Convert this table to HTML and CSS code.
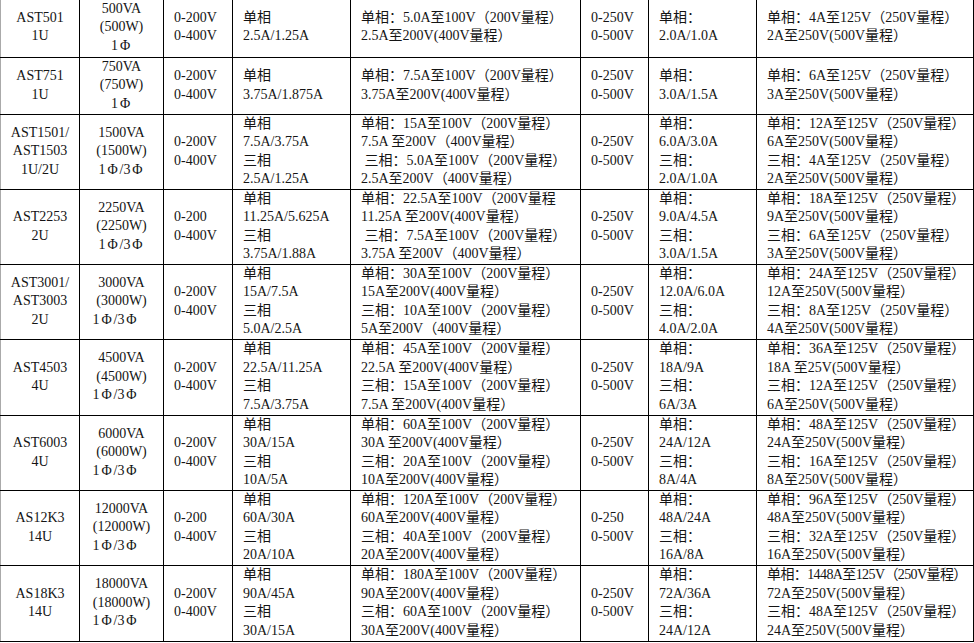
FILE: index.html
```html
<!DOCTYPE html>
<html lang="zh">
<head>
<meta charset="utf-8">
<title>AST 规格表</title>
<link rel="stylesheet" href="styles.css">
</head>
<body>
<table class="spec">
<colgroup>
<col class="c1"><col class="c2"><col class="c3"><col class="c4"><col class="c5"><col class="c6"><col class="c7"><col class="c8">
</colgroup>
<tbody>
<tr class="r1 first">
<td class="ctr">AST501<br>1U</td>
<td class="ctr">500VA<br>(500W)<br>1<span class="fw">Φ</span></td>
<td>0-200V<br>0-400V</td>
<td>单相<br>2.5A/1.25A</td>
<td>单相：5.0A至100V（200V量程）<br>2.5A至200V(400V量程）</td>
<td>0-250V<br>0-500V</td>
<td>单相：<br>2.0A/1.0A</td>
<td>单相：4A至125V（250V量程）<br>2A至250V(500V量程）</td>
</tr>
<tr class="r2">
<td class="ctr">AST751<br>1U</td>
<td class="ctr">750VA<br>(750W)<br>1<span class="fw">Φ</span></td>
<td>0-200V<br>0-400V</td>
<td>单相<br>3.75A/1.875A</td>
<td>单相：7.5A至100V（200V量程）<br>3.75A至200V(400V量程）</td>
<td>0-250V<br>0-500V</td>
<td>单相：<br>3.0A/1.5A</td>
<td>单相：6A至125V（250V量程）<br>3A至250V(500V量程）</td>
</tr>
<tr class="r4">
<td class="ctr">AST1501/<br>AST1503<br>1U/2U</td>
<td class="ctr">1500VA<br>(1500W)<br>1<span class="fw">Φ</span>/3<span class="fw">Φ</span></td>
<td>0-200V<br>0-400V</td>
<td>单相<br>7.5A/3.75A<br>三相<br>2.5A/1.25A</td>
<td>单相：15A至100V（200V量程）<br>7.5A 至200V（400V量程）<br> 三相：5.0A至100V（200V量程）<br>2.5A至200V（400V量程）</td>
<td>0-250V<br>0-500V</td>
<td>单相：<br>6.0A/3.0A<br>三相：<br>2.0A/1.0A</td>
<td>单相：12A至125V（250V量程）<br>6A至250V(500V量程）<br>三相：4A至125V（250V量程）<br>2A至250V(500V量程）</td>
</tr>
<tr class="r4">
<td class="ctr">AST2253<br>2U</td>
<td class="ctr">2250VA<br>(2250W)<br>1<span class="fw">Φ</span>/3<span class="fw">Φ</span></td>
<td>0-200<br>0-400V</td>
<td>单相<br>11.25A/5.625A<br>三相<br>3.75A/1.88A</td>
<td>单相：22.5A至100V（200V量程<br>11.25A 至200V(400V量程）<br> 三相：7.5A至100V（200V量程）<br>3.75A 至200V（400V量程）</td>
<td>0-250V<br>0-500V</td>
<td>单相：<br>9.0A/4.5A<br>三相：<br>3.0A/1.5A</td>
<td>单相：18A至125V（250V量程）<br>9A至250V(500V量程）<br>三相：6A至125V（250V量程）<br>3A至250V(500V量程）</td>
</tr>
<tr class="r4">
<td class="ctr">AST3001/<br>AST3003<br>2U</td>
<td class="ctr">3000VA<br>(3000W)<br><span class="sh">1<span class="fw">Φ</span>/3<span class="fw">Φ</span></span></td>
<td>0-200V<br>0-400V</td>
<td>单相<br>15A/7.5A<br>三相<br>5.0A/2.5A</td>
<td>单相：30A至100V（200V量程）<br>15A至200V(400V量程）<br>三相：10A至100V（200V量程）<br>5A至200V（400V量程）</td>
<td>0-250V<br>0-500V</td>
<td>单相：<br>12.0A/6.0A<br>三相：<br>4.0A/2.0A</td>
<td>单相：24A至125V（250V量程）<br>12A至250V(500V量程）<br>三相：8A至125V（250V量程）<br>4A至250V(500V量程）</td>
</tr>
<tr class="r4b">
<td class="ctr">AST4503<br>4U</td>
<td class="ctr">4500VA<br>(4500W)<br><span class="sh">1<span class="fw">Φ</span>/3<span class="fw">Φ</span></span></td>
<td>0-200V<br>0-400V</td>
<td>单相<br>22.5A/11.25A<br>三相<br>7.5A/3.75A</td>
<td>单相：45A至100V（200V量程）<br>22.5A 至200V(400V量程）<br>三相：15A至100V（200V量程）<br>7.5A 至200V(400V量程）</td>
<td>0-250V<br>0-500V</td>
<td>单相：<br>18A/9A<br>三相：<br>6A/3A</td>
<td>单相：36A至125V（250V量程）<br>18A 至25V(500V量程）<br>三相：12A至125V（250V量程）<br>6A至250V(500V量程）</td>
</tr>
<tr class="r4">
<td class="ctr">AST6003<br>4U</td>
<td class="ctr">6000VA<br>(6000W)<br><span class="sh">1<span class="fw">Φ</span>/3<span class="fw">Φ</span></span></td>
<td>0-200V<br>0-400V</td>
<td>单相<br>30A/15A<br>三相<br>10A/5A</td>
<td>单相：60A至100V（200V量程）<br>30A 至200V(400V量程）<br>三相：20A至100V（200V量程）<br>10A至200V(400V量程）</td>
<td>0-250V<br>0-500V</td>
<td>单相：<br>24A/12A<br>三相：<br>8A/4A</td>
<td>单相：48A至125V（250V量程）<br>24A至250V(500V量程）<br>三相：16A至125V（250V量程）<br>8A至250V(500V量程）</td>
</tr>
<tr class="r4">
<td class="ctr">AS12K3<br>14U</td>
<td class="ctr">12000VA<br>(12000W)<br><span class="sh">1<span class="fw">Φ</span>/3<span class="fw">Φ</span></span></td>
<td>0-200<br>0-400V</td>
<td>单相<br>60A/30A<br>三相<br>20A/10A</td>
<td>单相：120A至100V（200V量程）<br>60A至200V(400V量程）<br>三相：40A至100V（200V量程）<br>20A至200V(400V量程）</td>
<td>0-250<br>0-500V</td>
<td>单相：<br>48A/24A<br>三相：<br>16A/8A</td>
<td>单相：96A至125V（250V量程）<br>48A至250V(500V量程）<br>三相：32A至125V（250V量程）<br>16A至250V(500V量程）</td>
</tr>
<tr class="r4b">
<td class="ctr">AS18K3<br>14U</td>
<td class="ctr">18000VA<br>(18000W)<br><span class="sh">1<span class="fw">Φ</span>/3<span class="fw">Φ</span></span></td>
<td>0-200V<br>0-400V</td>
<td>单相<br>90A/45A<br>三相<br>30A/15A</td>
<td>单相：180A至100V（200V量程）<br>90A至200V(400V量程）<br>三相：60A至100V（200V量程）<br>30A至200V(400V量程）</td>
<td>0-250V<br>0-500V</td>
<td>单相：<br>72A/36A<br>三相：<br>24A/12A</td>
<td><span class="tight">单相：1448A至125V（250V量程）</span><br>72A至250V(500V量程）<br>三相：48A至125V（250V量程）<br>24A至250V(500V量程）</td>
</tr>
</tbody>
</table>
</body>
</html>
```
FILE: styles.css
```css
html, body {
  margin: 0;
  padding: 0;
  background: #fff;
}

.spec {
  border-collapse: collapse;
  table-layout: fixed;
  width: 973px;
  margin-top: -2px;
  font-family: "Liberation Serif", "Noto Sans CJK SC", serif;
  font-size: 14px;
  line-height: 18.5px;
  color: #141414;
}

.c1 { width: 79px; }
.c2 { width: 84px; }
.c3 { width: 69px; }
.c4 { width: 118px; }
.c5 { width: 230px; }
.c6 { width: 68px; }
.c7 { width: 108px; }
.c8 { width: 217px; }

.spec td {
  border: 1px solid #000;
  padding: 0 0 0 10px;
  vertical-align: middle;
  text-align: left;
  white-space: pre;
  overflow: visible;
}

.spec td:first-child {
  border-left-color: #aaa;
}

.spec td.ctr {
  text-align: center;
  padding: 0;
}

.first td {
  border-top: 0;
}

.r1 { height: 59px; }
.r2 { height: 57px; }
.r4 { height: 75px; }
.r4b { height: 76px; }

.fw {
  display: inline-block;
  width: 14px;
  text-align: center;
}

.sh {
  padding-right: 12px;
}

.tight {
  letter-spacing: -0.6px;
}
```
